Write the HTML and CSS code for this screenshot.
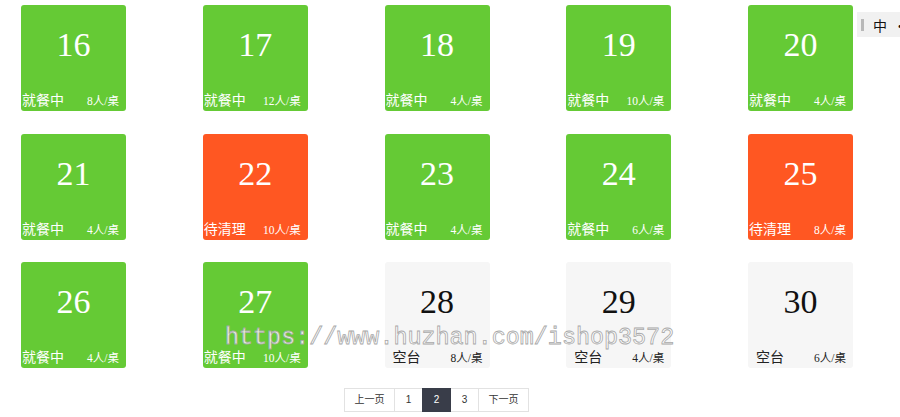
FILE: index.html
```html
<!DOCTYPE html>
<html lang="zh">
<head>
<meta charset="utf-8">
<title>餐桌</title>
<link rel="stylesheet" href="styles.css">
</head>
<body>
<div class="page">
  <div class="grid">
    <div class="table busy"><div class="num">16</div><div class="foot"><span class="status">就餐中</span><span class="cap">8人/桌</span></div></div>
    <div class="table busy"><div class="num">17</div><div class="foot"><span class="status">就餐中</span><span class="cap">12人/桌</span></div></div>
    <div class="table busy"><div class="num">18</div><div class="foot"><span class="status">就餐中</span><span class="cap">4人/桌</span></div></div>
    <div class="table busy"><div class="num">19</div><div class="foot"><span class="status">就餐中</span><span class="cap">10人/桌</span></div></div>
    <div class="table busy"><div class="num">20</div><div class="foot"><span class="status">就餐中</span><span class="cap">4人/桌</span></div></div>

    <div class="table busy"><div class="num">21</div><div class="foot"><span class="status">就餐中</span><span class="cap">4人/桌</span></div></div>
    <div class="table clean"><div class="num">22</div><div class="foot"><span class="status">待清理</span><span class="cap">10人/桌</span></div></div>
    <div class="table busy"><div class="num">23</div><div class="foot"><span class="status">就餐中</span><span class="cap">4人/桌</span></div></div>
    <div class="table busy"><div class="num">24</div><div class="foot"><span class="status">就餐中</span><span class="cap">6人/桌</span></div></div>
    <div class="table clean"><div class="num">25</div><div class="foot"><span class="status">待清理</span><span class="cap">8人/桌</span></div></div>

    <div class="table busy"><div class="num">26</div><div class="foot"><span class="status">就餐中</span><span class="cap">4人/桌</span></div></div>
    <div class="table busy"><div class="num">27</div><div class="foot"><span class="status">就餐中</span><span class="cap">10人/桌</span></div></div>
    <div class="table free"><div class="num">28</div><div class="foot"><span class="status">空台</span><span class="cap">8人/桌</span></div></div>
    <div class="table free"><div class="num">29</div><div class="foot"><span class="status">空台</span><span class="cap">4人/桌</span></div></div>
    <div class="table free"><div class="num">30</div><div class="foot"><span class="status">空台</span><span class="cap">6人/桌</span></div></div>
  </div>

  <div class="pager">
    <a class="pg wide">上一页</a>
    <a class="pg">1</a>
    <a class="pg current">2</a>
    <a class="pg">3</a>
    <a class="pg wide">下一页</a>
  </div>
</div>

<div class="ime"><span class="bar"></span><span class="ime-txt">中</span><span class="ime-dot">·</span></div>

<div class="watermark">https://www.huzhan.com/ishop3572</div>
</body>
</html>
```

FILE: styles.css
```css
html, body {
  margin: 0;
  padding: 0;
  background: #ffffff;
  overflow: hidden;
}
body {
  width: 900px;
  height: 417px;
  position: relative;
  font-family: "Liberation Serif", "Noto Sans CJK SC", serif;
}
.page {
  padding: 5px 0 0 21px;
  width: 832px;
}
.grid {
  display: grid;
  grid-template-columns: repeat(4, 181.75px) 105px;
  grid-auto-rows: 106px;
  row-gap: 22.5px;
}
.table {
  width: 105px;
  height: 106px;
  border-radius: 3px;
  display: flex;
  flex-direction: column;
  box-sizing: border-box;
}
.busy { background: #65ca35; color: #ffffff; }
.clean { background: #ff5722; color: #ffffff; }
.free { background: #f6f6f6; color: #111111; }
.num {
  height: 80px;
  font-size: 34px;
  line-height: 80px;
  text-align: center;
}
.foot {
  display: flex;
  justify-content: space-between;
  align-items: baseline;
  padding: 6px 7px 0 0;
}
.status {
  width: 44px;
  text-align: center;
  font-size: 14px;
  font-family: "Noto Sans CJK SC", sans-serif;
  line-height: 16px;
}
.cap {
  font-size: 11.5px;
  line-height: 14px;
}
.free .status, .free .cap { color: #222222; }

.pager {
  display: flex;
  justify-content: center;
  margin-top: 20px;
  font-family: "Liberation Sans", "Noto Sans CJK SC", sans-serif;
}
.pg {
  box-sizing: border-box;
  height: 24px;
  width: 29px;
  line-height: 22px;
  font-size: 10px;
  color: #333333;
  background: #ffffff;
  border: 1px solid #e2e2e2;
  margin-left: -1px;
  text-align: center;
}
.pg.wide { width: 51px; }
.pg.current {
  background: #393d49;
  border-color: #393d49;
  color: #ffffff;
  position: relative;
}

.ime {
  position: absolute;
  left: 857px;
  top: 12px;
  width: 60px;
  height: 25px;
  background: #f1f1f1;
  display: flex;
  align-items: center;
  font-family: "Noto Sans CJK SC", sans-serif;
  font-size: 14px;
  color: #111111;
}
.bar {
  width: 3px;
  height: 12px;
  background: #b8b8b8;
  margin: 0 9px 0 4px;
}
.ime-dot { margin-left: 6px; }

.watermark {
  position: absolute;
  left: 225px;
  top: 323px;
  font-family: "Liberation Mono", monospace;
  font-size: 23.4px;
  line-height: 30px;
  color: rgba(255,255,255,0.85);
  -webkit-text-stroke: 0.8px #a8a8a8;
  white-space: nowrap;
  pointer-events: none;
}
```
